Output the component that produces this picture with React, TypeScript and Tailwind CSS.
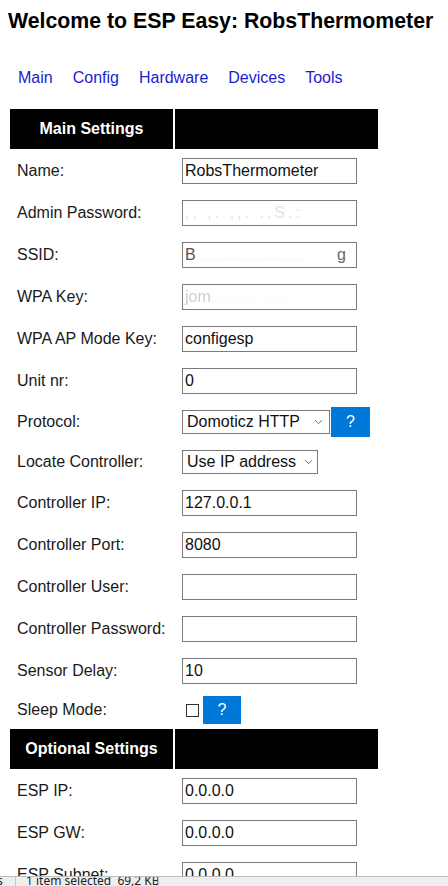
import React from "react";

const Chevron = () => (
  <svg width="9" height="6" viewBox="0 0 9 6" className="shrink-0">
    <path d="M1 1.2 L4.5 4.7 L8 1.2" fill="none" stroke="#6a6a6a" strokeWidth="1" />
  </svg>
);

const Input = ({ children }: { children?: React.ReactNode }) => (
  <div className="w-[175px] h-[26px] border border-[#7a7a7a] bg-white flex items-center pl-[2px] text-[16px] text-[#111] overflow-hidden whitespace-nowrap">
    {children}
  </div>
);

const HelpBtn = ({ h, w }: { h: string; w: string }) => (
  <div className={`${h} ${w} bg-[#0078d7] text-white text-[16px] flex items-center justify-center`}>?</div>
);

const Row = ({
  label,
  h = "h-[40px]",
  children,
}: {
  label: string;
  h?: string;
  children: React.ReactNode;
}) => (
  <div className={`flex gap-[2px] ${h}`}>
    <div className="w-[163px] pl-[7px] flex items-center text-[16px] text-[#1a1a1a] whitespace-nowrap">{label}</div>
    <div className="w-[203px] pl-[7px] flex items-center">{children}</div>
  </div>
);

const Header = ({ title }: { title: string }) => (
  <div className="flex gap-[2px] h-[40px]">
    <div className="w-[163px] bg-black text-white font-bold text-[16px] flex items-center justify-center">{title}</div>
    <div className="w-[203px] bg-black" />
  </div>
);

export default function App() {
  return (
    <div className="relative w-[448px] h-[886px] overflow-hidden bg-white text-black font-['Liberation_Sans',Arial,sans-serif]">
      <h1 className="ml-2 pt-[9px] text-[21.3px] font-bold leading-[24px] whitespace-nowrap">
        Welcome to ESP Easy: RobsThermometer
      </h1>
      <nav className="mt-[35px] ml-2 flex text-[16px] leading-[20px] text-[#1c1cd4]">
        <span className="px-[10px]">Main</span>
        <span className="px-[10px]">Config</span>
        <span className="px-[10px]">Hardware</span>
        <span className="px-[10px]">Devices</span>
        <span className="px-[10px]">Tools</span>
      </nav>
      <div className="mt-[19px] ml-2 w-[372px] p-[2px] flex flex-col gap-[2px]">
        <Header title="Main Settings" />
        <Row label="Name:">
          <Input>RobsThermometer</Input>
        </Row>
        <Row label="Admin Password:">
          <Input>
            <span className="text-[#e2e2e2] blur-[0.7px] tracking-[3px]">,, ,. .,. ..S.:</span>
          </Input>
        </Row>
        <Row label="SSID:">
          <Input>
            <span className="text-[#555]">B</span>
            <span className="text-[#ededed] blur-[1px]">.........................</span>
            <span className="text-[#666] ml-auto mr-[10px]">g</span>
          </Input>
        </Row>
        <Row label="WPA Key:">
          <Input>
            <span className="text-[#cfcfcf] blur-[0.5px]">jom</span>
            <span className="text-[#f2f2f2] blur-[1px]">........... .....</span>
          </Input>
        </Row>
        <Row label="WPA AP Mode Key:">
          <Input>configesp</Input>
        </Row>
        <Row label="Unit nr:">
          <Input>0</Input>
        </Row>
        <Row label="Protocol:" h="h-[38px]">
          <div className="flex items-center gap-[1px]">
            <div className="w-[148px] h-[24px] border border-[#7a7a7a] bg-white flex items-center justify-between pl-[4px] pr-[6px] text-[16px] text-[#111] whitespace-nowrap">
              <span>Domoticz HTTP</span>
              <Chevron />
            </div>
            <HelpBtn h="h-[30px]" w="w-[39px]" />
          </div>
        </Row>
        <Row label="Locate Controller:" h="h-[38px]">
          <div className="w-[136px] h-[24px] border border-[#7a7a7a] bg-white flex items-center justify-between pl-[4px] pr-[4px] text-[16px] text-[#111] whitespace-nowrap">
            <span>Use IP address</span>
            <Chevron />
          </div>
        </Row>
        <Row label="Controller IP:">
          <Input>127.0.0.1</Input>
        </Row>
        <Row label="Controller Port:">
          <Input>8080</Input>
        </Row>
        <Row label="Controller User:">
          <Input />
        </Row>
        <Row label="Controller Password:">
          <Input />
        </Row>
        <Row label="Sensor Delay:">
          <Input>10</Input>
        </Row>
        <Row label="Sleep Mode:" h="h-[34px]">
          <div className="flex items-center">
            <div className="ml-[4px] w-[13px] h-[13px] border border-[#333] bg-white" />
            <div className="ml-[4px]">
              <HelpBtn h="h-[28px]" w="w-[38px]" />
            </div>
          </div>
        </Row>
        <Header title="Optional Settings" />
        <Row label="ESP IP:">
          <Input>0.0.0.0</Input>
        </Row>
        <Row label="ESP GW:">
          <Input>0.0.0.0</Input>
        </Row>
        <Row label="ESP Subnet:">
          <Input>0.0.0.0</Input>
        </Row>
      </div>
      <div className="absolute left-0 right-0 top-[876px] h-[10px] bg-[#eeeeee] border-t border-[#bdbdbd] overflow-hidden font-['Noto_Sans',sans-serif] text-[12px] leading-[12px] text-[#222]">
        <span className="absolute left-[-3px] top-[-2px]">s</span>
        <span className="absolute left-[15px] top-0 h-[10px] w-px bg-[#c8c8c8]" />
        <span className="absolute left-[26px] top-[-2px] whitespace-nowrap">1 item selected&nbsp;&nbsp;69,2 KB</span>
        <span className="absolute left-[158px] top-0 h-[10px] w-px bg-[#c8c8c8]" />
      </div>
    </div>
  );
}
